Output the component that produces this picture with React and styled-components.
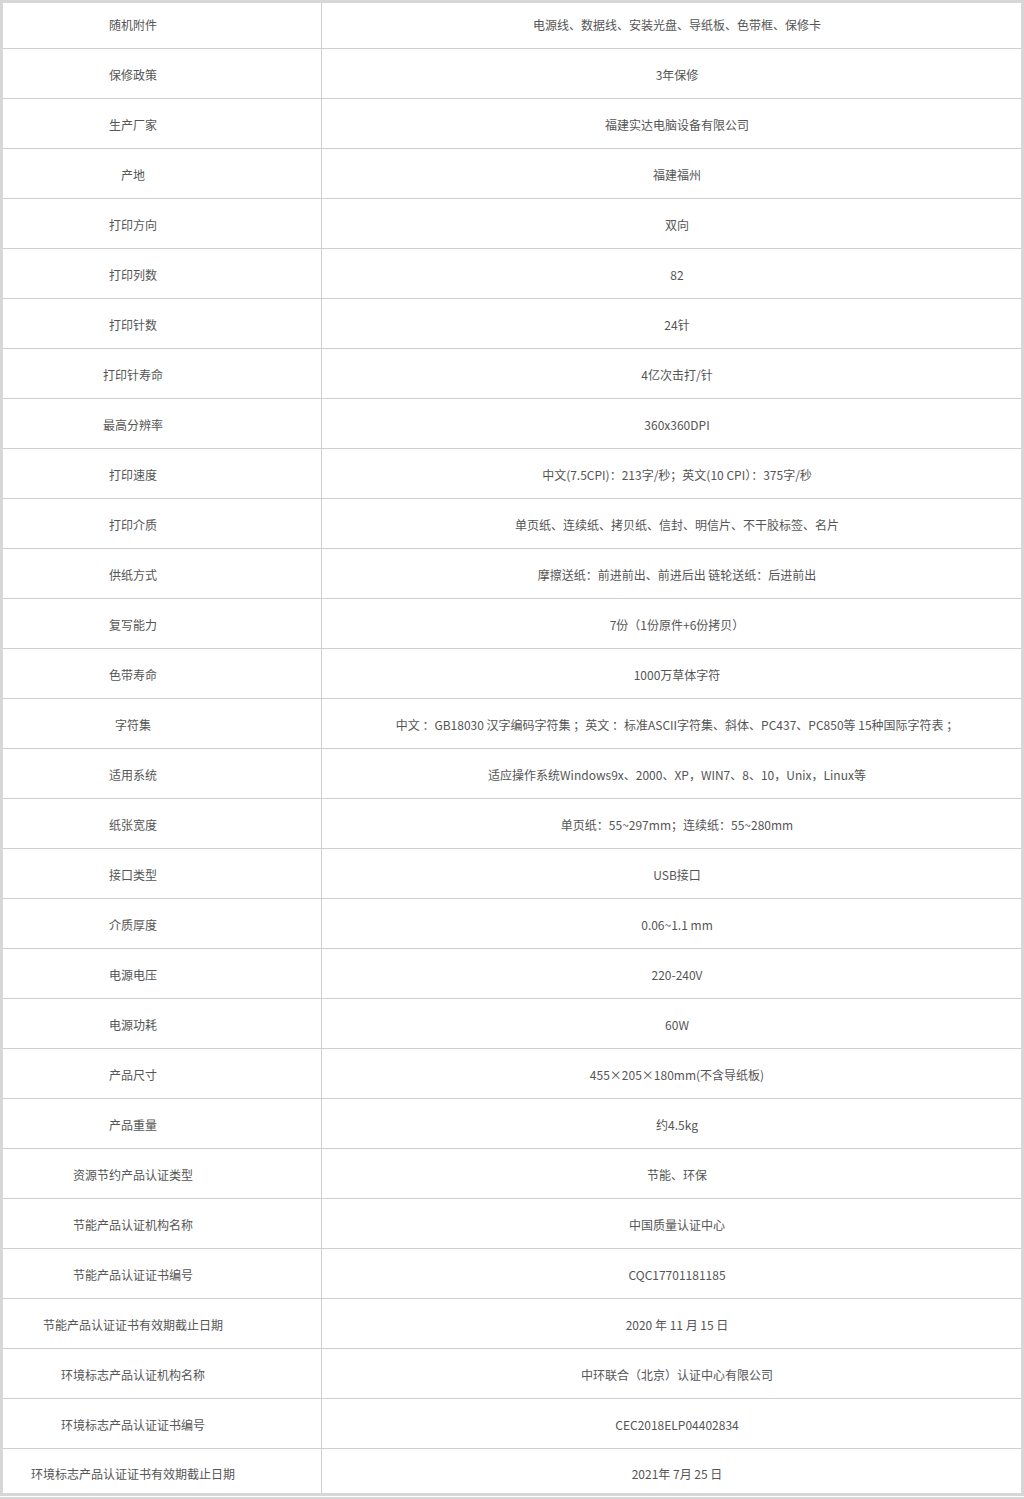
import React from 'react'
import styled, { createGlobalStyle } from 'styled-components'

const specs = [
  ['随机附件', '电源线、数据线、安装光盘、导纸板、色带框、保修卡'],
  ['保修政策', '3年保修'],
  ['生产厂家', '福建实达电脑设备有限公司'],
  ['产地', '福建福州'],
  ['打印方向', '双向'],
  ['打印列数', '82'],
  ['打印针数', '24针'],
  ['打印针寿命', '4亿次击打/针'],
  ['最高分辨率', '360x360DPI'],
  ['打印速度', '中文(7.5CPI)：213字/秒；英文(10 CPI）：375字/秒'],
  ['打印介质', '单页纸、连续纸、拷贝纸、信封、明信片、不干胶标签、名片'],
  ['供纸方式', '摩擦送纸：前进前出、前进后出 链轮送纸：后进前出'],
  ['复写能力', '7份（1份原件+6份拷贝）'],
  ['色带寿命', '1000万草体字符'],
  ['字符集', '中文 ：GB18030 汉字编码字符集 ；英文 ：标准ASCII字符集、斜体、PC437、PC850等 15种国际字符表 ；'],
  ['适用系统', '适应操作系统Windows9x、2000、XP，WIN7、8、10，Unix，Linux等'],
  ['纸张宽度', '单页纸：55~297mm；连续纸：55~280mm'],
  ['接口类型', 'USB接口'],
  ['介质厚度', '0.06~1.1 mm'],
  ['电源电压', '220-240V'],
  ['电源功耗', '60W'],
  ['产品尺寸', '455×205×180mm(不含导纸板)'],
  ['产品重量', '约4.5kg'],
  ['资源节约产品认证类型', '节能、环保'],
  ['节能产品认证机构名称', '中国质量认证中心'],
  ['节能产品认证证书编号', 'CQC17701181185'],
  ['节能产品认证证书有效期截止日期', '2020 年 11 月 15 日'],
  ['环境标志产品认证机构名称', '中环联合（北京）认证中心有限公司'],
  ['环境标志产品认证证书编号', 'CEC2018ELP04402834'],
  ['环境标志产品认证证书有效期截止日期', '2021年 7月 25 日'],
]

const Global = createGlobalStyle`
  html, body { margin: 0; padding: 0; background: #fff; }
  body {
    font-family: "Noto Sans CJK SC", "Noto Sans", sans-serif;
    font-size: 12px;
    color: #555;
  }
`

const Page = styled.div`
  width: 1024px;
  height: 1499px;
  overflow: hidden;
`

const Frame = styled.div`
  border: 3px solid #d7d7d7;
  border-bottom: none;
`

const Row = styled.div`
  display: grid;
  grid-template-columns: 319px 1fr;
  height: 49px;
  border-bottom: 1px solid #cfcfcf;
  & > * { padding-top: 1px; }
  &:first-child { height: 45px; }
  &:first-child > * { padding-top: 0; padding-bottom: 3px; }
  &:last-child { border-bottom: none; height: 44px; }
  &:last-child > * { padding-top: 5px; }
`

const Label = styled.div`
  display: flex;
  align-items: center;
  justify-content: center;
  border-right: 1px solid #cfcfcf;
  box-sizing: border-box;
  padding-right: 58px;
  white-space: nowrap;
`

const Value = styled.div`
  display: flex;
  align-items: center;
  justify-content: center;
  box-sizing: border-box;
  padding-left: 11px;
  white-space: nowrap;
`

const Bottom = styled.div`
  height: 3px;
  background: #d7d7d7;
  border-bottom: 1px solid #fff;
`

const Rule = styled.div`
  height: 2px;
  background: #d7d7d7;
`

export default function App() {
  return (
    <Page>
      <Global />
      <Frame>
        {specs.map(([k, v]) => (
          <Row key={k}>
            <Label>{k}</Label>
            <Value>{v}</Value>
          </Row>
        ))}
      </Frame>
      <Bottom />
      <Rule />
    </Page>
  )
}
